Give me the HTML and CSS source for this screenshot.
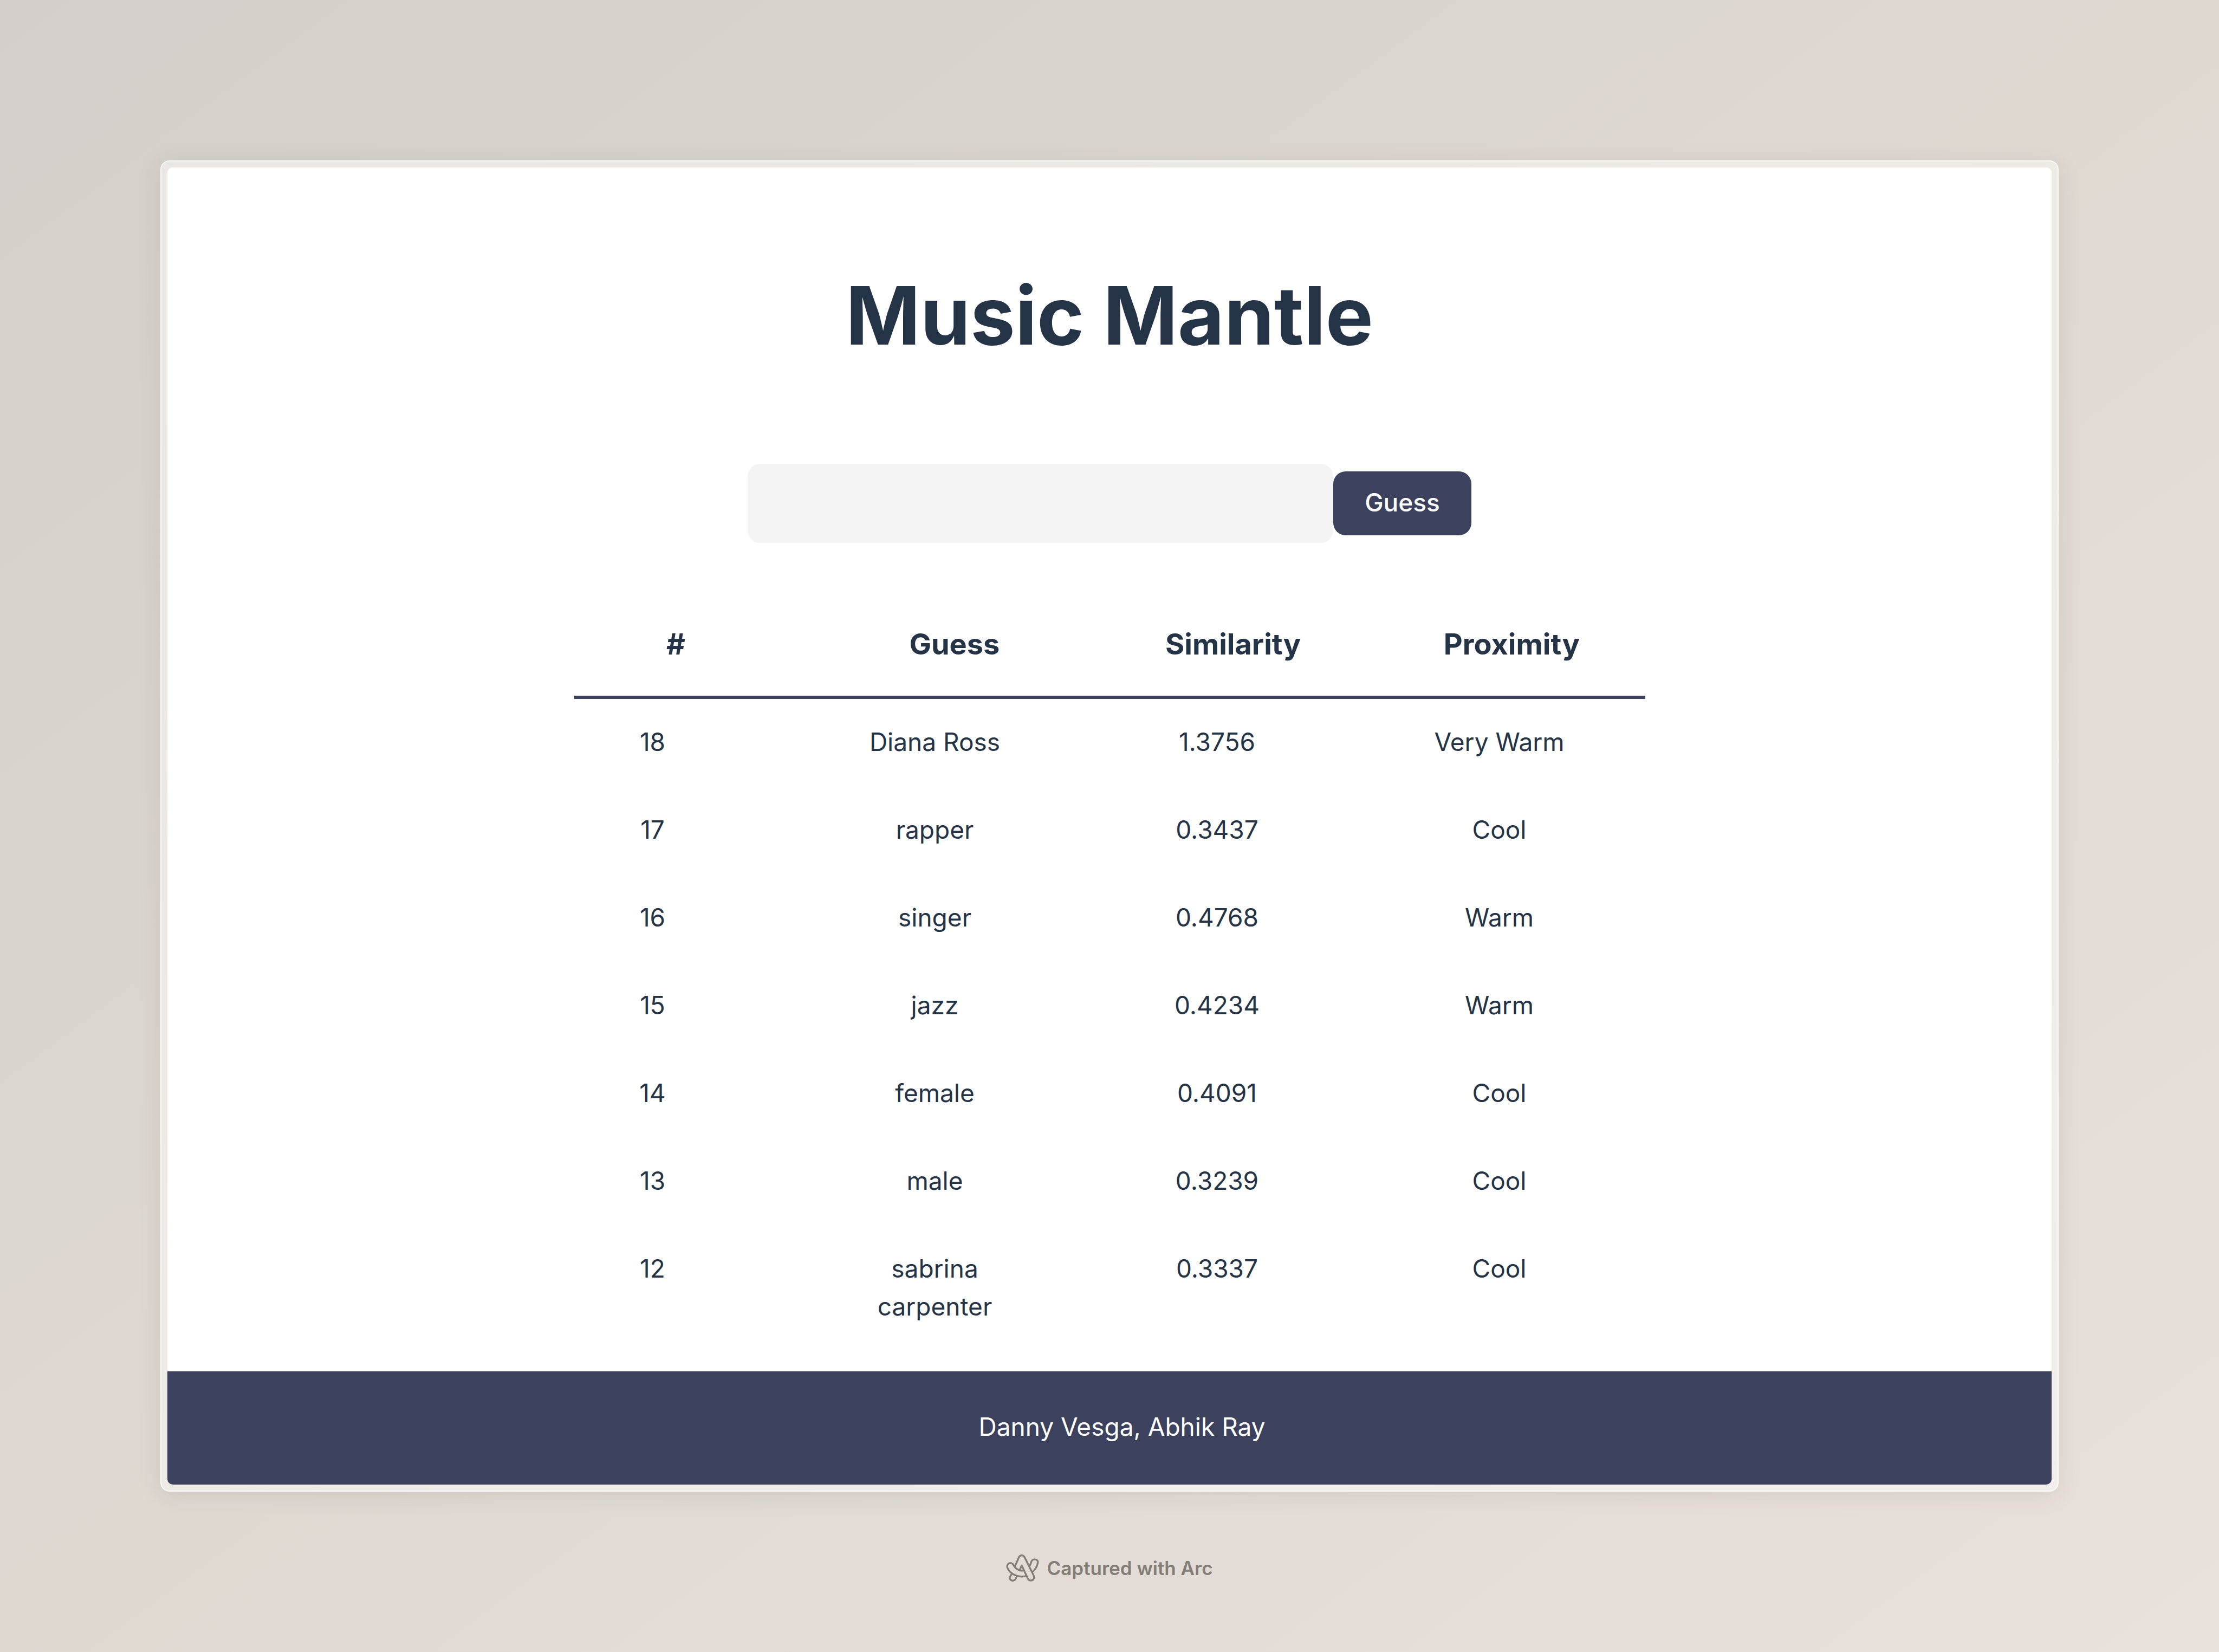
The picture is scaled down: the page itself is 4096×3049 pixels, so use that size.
FILE: index.html
```html
<!DOCTYPE html>
<html lang="en">
<head>
  <meta charset="utf-8">
  <title>Music Mantle</title>
  <link rel="stylesheet" href="styles.css">
</head>
<body>
  <div class="frame">
    <div class="app">
      <main class="content">
        <h1 class="title">Music Mantle</h1>
        <form class="guess-form">
          <input class="guess-input" type="text" name="guess" aria-label="Your guess">
          <button class="guess-button" type="button">Guess</button>
        </form>
        <table class="guesses">
          <thead>
            <tr><th scope="col">#</th><th scope="col">Guess</th><th scope="col">Similarity</th><th scope="col">Proximity</th></tr>
          </thead>
          <tbody>
            <tr><td>18</td><td>Diana Ross</td><td>1.3756</td><td>Very Warm</td></tr>
            <tr><td>17</td><td>rapper</td><td>0.3437</td><td>Cool</td></tr>
            <tr><td>16</td><td>singer</td><td>0.4768</td><td>Warm</td></tr>
            <tr><td>15</td><td>jazz</td><td>0.4234</td><td>Warm</td></tr>
            <tr><td>14</td><td>female</td><td>0.4091</td><td>Cool</td></tr>
            <tr><td>13</td><td>male</td><td>0.3239</td><td>Cool</td></tr>
            <tr><td>12</td><td>sabrina carpenter</td><td>0.3337</td><td>Cool</td></tr>
          </tbody>
        </table>
      </main>
      <footer class="footer">Danny Vesga, Abhik Ray</footer>
    </div>
  </div>
  <div class="attribution">
    <svg class="arc-logo" viewBox="84 100 228 194" aria-hidden="true">
      <g transform="scale(1.033 1)" fill="none" stroke="currentColor" stroke-width="12" stroke-linejoin="round">
        <path d="M140 188 L165 128 Q172 110 186 110 Q200 110 208 128 L265 247 C275 266 263 283 247 283 Q233 283 226 268 L186 179 L172 212"/>
        <path d="M186 215 C163 215 142 198 132 178 C126 165 117 163 110 163 C97 163 86 177 90 193 C102 229 143 255 187 256 Q203 256 219 250"/>
        <path d="M186 215 Q195 215 203 211"/>
        <path d="M121 235 L108 258 C102 270 112 284 127 284 Q139 284 145 273 L154 254"/>
        <path d="M235 188 Q245 174 250 155 C255 138 270 136 279 138 C290 141 296 150 293 164 Q285 202 256 226"/>
      </g>
    </svg>
    <span>Captured with Arc</span>
  </div>
</body>
</html>
```
FILE: styles.css
```css
* {
  box-sizing: border-box;
}

body {
  margin: 0;
  min-height: 100vh;
  padding: 296px 296px 128px;
  font-family: Inter, "Liberation Sans", sans-serif;
  font-size: 46px;
  line-height: 70px;
  color: #243345;
  background: linear-gradient(to bottom right, #d4cfca 0%, #dfd9d2 50%, #e9e1dc 100%);
}

/* translucent browser frame */
.frame {
  padding: 11px;
  border: 2px solid rgba(255, 255, 255, 0.85);
  border-radius: 17px;
  background: rgba(255, 255, 255, 0.48);
  background-clip: padding-box;
  box-shadow: 0 6px 44px rgba(60, 50, 40, 0.1);
}

.app {
  display: flex;
  flex-direction: column;
  border-radius: 10px;
  overflow: hidden;
  background: #fff;
}

.content {
  display: flex;
  flex-direction: column;
  align-items: center;
  padding: 192px 0 37px;
}

.title {
  margin: 0 0 192px;
  font-size: 148px;
  line-height: 163px;
  font-weight: 700;
}

.guess-form {
  display: flex;
  align-items: center;
  margin-bottom: 87px;
}

.guess-input {
  width: 1081px;
  padding: 38px 46px;
  border: 0;
  border-radius: 23px;
  background: #f4f4f4;
  color: inherit;
  font: inherit;
}

.guess-button {
  padding: 22px 58px 26px;
  border: 0;
  border-radius: 23px;
  background: #3c415e;
  color: #fff;
  font: inherit;
  font-weight: 500;
}

.guesses {
  display: block;
  width: 1977px;
}

.guesses thead,
.guesses tbody {
  display: block;
}

.guesses tr {
  display: grid;
  grid-template-columns: repeat(4, 1fr);
  justify-items: center;
  text-align: center;
}

.guesses thead tr {
  column-gap: 138px;
  padding: 58px 58px 53px 0;
  border-bottom: 6px solid #3c415e;
}

.guesses tbody tr {
  column-gap: 231px;
  padding: 44px 124px 48px 0;
}

.guesses th {
  padding: 0;
  font-size: 54px;
  line-height: 84px;
  font-weight: 700;
}

.guesses td {
  padding: 0;
}

.footer {
  padding: 67px 0 72px 46px;
  background: #3c415e;
  color: #fff;
  text-align: center;
}

.attribution {
  display: flex;
  justify-content: center;
  align-items: center;
  gap: 14px;
  margin-top: 115px;
  font-size: 35px;
  line-height: 52px;
  font-weight: 600;
  color: #827c77;
}

.arc-logo {
  width: 61px;
  height: 52px;
}
```
